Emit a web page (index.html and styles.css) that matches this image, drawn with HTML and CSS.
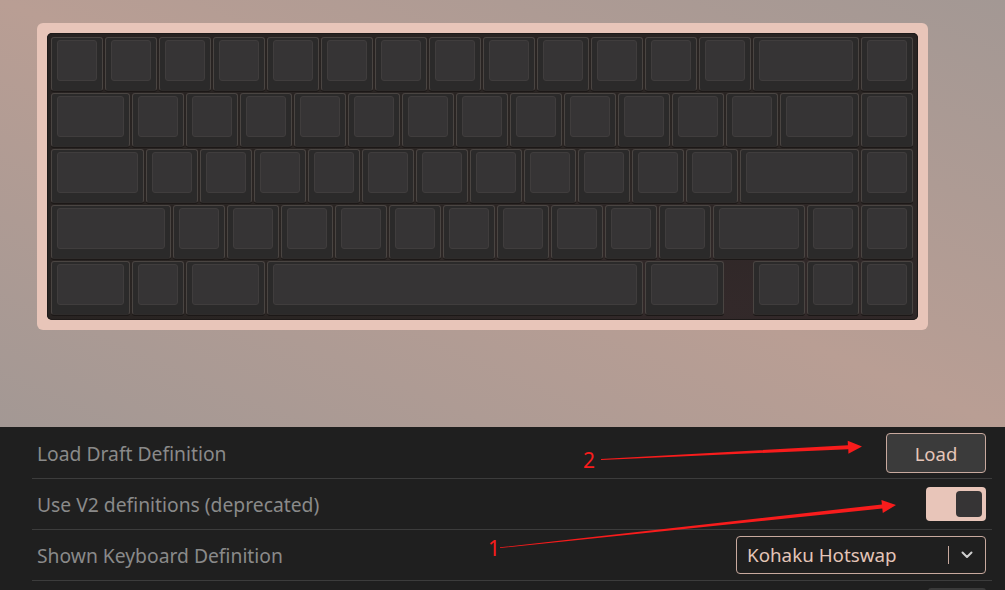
FILE: index.html
```html
<!DOCTYPE html>
<html>
<head>
<meta charset="utf-8">
<link rel="stylesheet" href="styles.css">
</head>
<body>
<div class="page">
  <section class="stage">
    <div class="frame">
      <div class="plate">
        <div class="row">
          <div class="key"></div><div class="key"></div><div class="key"></div><div class="key"></div>
          <div class="key"></div><div class="key"></div><div class="key"></div><div class="key"></div>
          <div class="key"></div><div class="key"></div><div class="key"></div><div class="key"></div>
          <div class="key"></div><div class="key k2"></div><div class="key"></div>
        </div>
        <div class="row">
          <div class="key k15"></div>
          <div class="key"></div><div class="key"></div><div class="key"></div><div class="key"></div>
          <div class="key"></div><div class="key"></div><div class="key"></div><div class="key"></div>
          <div class="key"></div><div class="key"></div><div class="key"></div><div class="key"></div>
          <div class="key k15"></div><div class="key"></div>
        </div>
        <div class="row">
          <div class="key k175"></div>
          <div class="key"></div><div class="key"></div><div class="key"></div><div class="key"></div>
          <div class="key"></div><div class="key"></div><div class="key"></div><div class="key"></div>
          <div class="key"></div><div class="key"></div><div class="key"></div>
          <div class="key k225"></div><div class="key"></div>
        </div>
        <div class="row">
          <div class="key k225"></div>
          <div class="key"></div><div class="key"></div><div class="key"></div><div class="key"></div>
          <div class="key"></div><div class="key"></div><div class="key"></div><div class="key"></div>
          <div class="key"></div><div class="key"></div>
          <div class="key k175"></div><div class="key"></div><div class="key"></div>
        </div>
        <div class="row">
          <div class="key k15"></div><div class="key"></div><div class="key k15"></div>
          <div class="key k7"></div><div class="key k15"></div>
          <div class="spacer"></div>
          <div class="key"></div><div class="key"></div><div class="key"></div>
        </div>
      </div>
    </div>
  </section>

  <section class="panel">
    <div class="settings">
      <div class="setting">
        <span class="label">Load Draft Definition</span>
        <button class="btn">Load</button>
      </div>
      <div class="setting">
        <span class="label">Use V2 definitions (deprecated)</span>
        <div class="toggle"><div class="knob"></div></div>
      </div>
      <div class="setting">
        <span class="label">Shown Keyboard Definition</span>
        <div class="select">
          <span class="select-value">Kohaku Hotswap</span>
          <span class="select-sep"></span>
          <svg class="chev" width="12" height="8" viewBox="0 0 12 8"><path d="M1.5 1.5 L6 6 L10.5 1.5" fill="none" stroke="#cfcfcf" stroke-width="2" stroke-linecap="round" stroke-linejoin="round"/></svg>
        </div>
      </div>
      <div class="setting setting-last">
        <span class="label"></span>
        <div class="stub"></div>
      </div>
    </div>
  </section>

  <svg class="notes" width="1005" height="590" viewBox="0 0 1005 590">
    <polygon fill="#f81c1c" points="601,459.9 848.3,449.2 848.4,453.7 862,446.5 847.7,440.7 847.9,445.2 601,459.1"/>
    <polygon fill="#f81c1c" points="500,548.1 882.3,508.5 882.8,513 896,505 881.4,500 881.9,504.5 500,547.3"/>
    <text class="note-num" x="583" y="468">2</text>
    <text class="note-num" x="488" y="556">1</text>
  </svg>
</div>
</body>
</html>
```
FILE: styles.css
```css
* { box-sizing: border-box; }

html, body {
  margin: 0;
  padding: 0;
  background: #1f1f1f;
  font-family: "Noto Sans", "Open Sans", sans-serif;
}

.page {
  position: relative;
  width: 1005px;
  height: 590px;
  overflow: hidden;
}

.stage {
  height: 427px;
  padding: 23px 0 0 37px;
  background: linear-gradient(to bottom left, #a39894 0%, #b99e94 50%, #a39894 100%);
}

.frame {
  display: inline-block;
  padding: 10px;
  background: #e8c5b9;
  border-radius: 6px;
}

.plate {
  display: flex;
  flex-direction: column;
  gap: 2px;
  padding: 4px 5px 5px 4px;
  background: radial-gradient(ellipse at 78% 95%, #33292a 0%, #2a2523 45%, #272221 100%);
  border-radius: 5px;
  box-shadow: inset 0 0 0 1px #1e1a19;
}

.row {
  display: flex;
  gap: 2px;
  height: 54px;
}

.key {
  position: relative;
  width: 52px;
  height: 54px;
  flex: none;
  background: #2b2a2a;
  border: 1px solid #4a4542;
  border-bottom-color: #2e2b2a;
  border-radius: 3px;
  box-shadow: 0 1px 0 #1c1817;
}

.key::after {
  content: "";
  position: absolute;
  left: 5px;
  right: 5px;
  top: 2px;
  bottom: 9px;
  background: #363435;
  border: 1px solid #403d3d;
  border-radius: 3px;
}

.k15 { width: 79px; }
.k175 { width: 92.5px; }
.k2 { width: 106px; }
.k225 { width: 119.5px; }
.k7 { width: 376px; }

.spacer {
  width: 25px;
  flex: none;
}

.panel {
  height: 163px;
  padding-top: 1px;
  background: #1f1f1f;
}

.settings {
  margin-left: 32px;
  width: 960px;
}

.setting {
  display: flex;
  align-items: center;
  justify-content: space-between;
  height: 51px;
  padding: 0 6px 0 5px;
  border-bottom: 1px solid #3c3c3c;
}

.setting-last {
  border-bottom: none;
  align-items: flex-start;
  padding-top: 7px;
}

.label {
  color: #8a8a8a;
  font-size: 19.3px;
}

.btn {
  width: 100px;
  height: 40px;
  background: #3b3b3b;
  border: 1px solid #c8a99e;
  border-radius: 4px;
  color: #e6c6b9;
  font-family: "Noto Sans", "Open Sans", sans-serif;
  font-size: 18.5px;
  padding: 0;
}

.toggle {
  display: flex;
  justify-content: flex-end;
  align-items: center;
  width: 60px;
  height: 34px;
  padding-right: 4px;
  background: #e8c5b9;
  border-radius: 4px;
}

.knob {
  width: 26px;
  height: 26px;
  background: #363435;
  border-radius: 4px;
}

.select {
  display: flex;
  align-items: center;
  width: 250px;
  height: 38px;
  padding-left: 10px;
  border: 1px solid #c8a99e;
  border-radius: 4px;
}

.select-value {
  flex: 1;
  color: #e4c5b8;
  font-size: 18.8px;
}

.select-sep {
  width: 1px;
  height: 18px;
  background: #c8a99e;
}

.chev {
  margin: 0 12px 0 12px;
}

.stub {
  width: 58px;
  height: 20px;
  background: #3a3a3a;
  border-radius: 3px;
}

.notes {
  position: absolute;
  left: 0;
  top: 0;
  pointer-events: none;
}

.note-num {
  fill: #f81c1c;
  font-family: "Noto Sans", sans-serif;
  font-size: 21px;
}
```
